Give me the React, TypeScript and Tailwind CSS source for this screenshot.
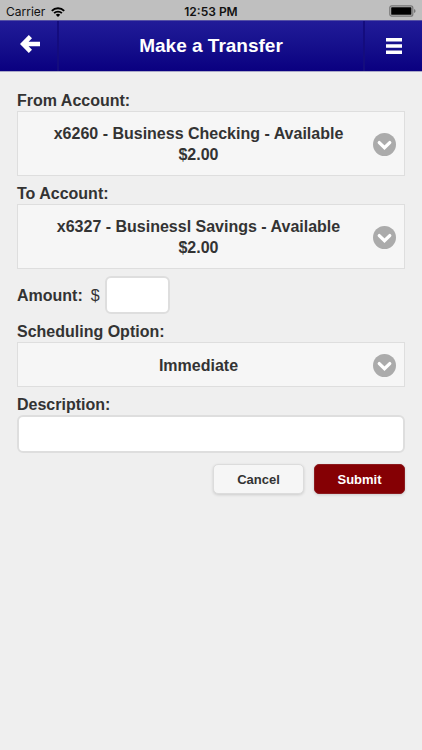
import { useState } from "react";

type SelectFieldProps = {
  id: string;
  label: string;
  options: string[];
};

function SelectField({ id, label, options }: SelectFieldProps) {
  const [value, setValue] = useState(options[0]);
  return (
    <div>
      <label htmlFor={id} className="block">
        {label}
      </label>
      <div className="relative flex min-h-[45px] items-center border border-[#dedede] bg-[#f6f6f6] pt-[11px] pr-2 pb-2.5 pl-1.5">
        <span aria-hidden="true" className="flex-1 px-4 text-center">
          {value}
        </span>
        <svg aria-hidden="true" viewBox="0 0 22 22" className="-my-1 size-[23px] shrink-0">
          <circle cx="11" cy="11" r="11" fill="#ababab" />
          <path
            d="M6 9.2 L11 14 L16 9.2"
            fill="none"
            stroke="#fff"
            strokeWidth="3.2"
            strokeLinecap="round"
            strokeLinejoin="miter"
          />
        </svg>
        <select
          id={id}
          value={value}
          onChange={(e) => setValue(e.target.value)}
          className="absolute inset-0 size-full cursor-pointer opacity-0"
        >
          {options.map((option) => (
            <option key={option}>{option}</option>
          ))}
        </select>
      </div>
    </div>
  );
}

function StatusBar() {
  return (
    <div className="grid h-5 grid-cols-3 items-center bg-[#bfbfbf] px-1.5 font-[Inter,sans-serif] text-xs leading-5 text-[#111]">
      <div className="flex items-center gap-1.5 pt-0.5">
        <span className="font-normal">Carrier</span>
        <svg aria-label="Wi-Fi" viewBox="0 0 14 10" className="h-2.5 w-3.5">
          <g fill="none" stroke="#000" strokeWidth="1.9">
            <path d="M0.8 3.8 A8.8 8.8 0 0 1 13.2 3.8" />
            <path d="M3.1 6.2 A5.5 5.5 0 0 1 10.9 6.2" />
          </g>
          <path d="M7 10 L4.8 7.8 A3.1 3.1 0 0 1 9.2 7.8 Z" fill="#000" />
        </svg>
      </div>
      <span className="pt-0.5 text-center font-semibold">12:53 PM</span>
      <svg aria-label="Battery" viewBox="0 0 27 12" className="h-3 w-[27px] justify-self-end">
        <rect x="0.8" y="0.8" width="23" height="10.4" rx="2" fill="none" stroke="#777" strokeWidth="1.2" />
        <rect x="2.2" y="2.2" width="20.2" height="7.6" rx="0.6" fill="#000" />
        <path d="M25 4 Q26.6 4.4 26.6 6 Q26.6 7.6 25 8 Z" fill="#777" />
      </svg>
    </div>
  );
}

export default function App() {
  return (
    <div className="min-h-screen bg-[#efefef] font-['Liberation_Sans',Arial,sans-serif] text-base leading-[21px] font-bold text-[#333]">
      <StatusBar />
      <header className="flex h-[52px] items-stretch border-t border-b border-t-[#5550a5] border-b-[#aaa8c8] bg-linear-to-b from-[#211b98] to-[#0a0080] text-white">
        <button
          type="button"
          aria-label="Back"
          className="flex w-[59px] items-center justify-center border-r-2 border-[#140c7e] pb-1 pl-0.5"
        >
          <svg viewBox="0 0 20 18" className="h-[18px] w-5">
            <path d="M0 9 L8.8 0 L12 3.2 L8.6 6.7 H20 V11.3 H8.6 L12 14.8 L8.8 18 Z" fill="#fff" />
          </svg>
        </button>
        <h1 className="flex flex-1 items-center justify-center pb-px text-[19px] font-bold">
          Make a Transfer
        </h1>
        <button
          type="button"
          aria-label="Menu"
          className="flex w-[59px] items-center justify-center border-l-2 border-[#140c7e] pb-px"
        >
          <svg viewBox="0 0 16 16" className="size-4">
            <path d="M0 0 H16 V3.4 H0 Z M0 6.3 H16 V9.7 H0 Z M0 12.6 H16 V16 H0 Z" fill="#fff" />
          </svg>
        </button>
      </header>
      <main>
        <form onSubmit={(e) => e.preventDefault()} className="flex flex-col gap-[7px] px-[17px] pt-[18px]">
          <SelectField
            id="from-account"
            label="From Account:"
            options={["x6260 - Business Checking - Available $2.00"]}
          />
          <SelectField
            id="to-account"
            label="To Account:"
            options={["x6327 - Businessl Savings - Available $2.00"]}
          />
          <div className="flex items-center">
            <label htmlFor="amount">Amount:</label>
            <span className="pr-[5px] pl-2 font-normal">$</span>
            <input
              id="amount"
              type="text"
              inputMode="decimal"
              className="h-[38px] w-[65px] rounded-md border-2 border-[#dedede] bg-white px-2 font-normal"
            />
          </div>
          <SelectField id="schedule" label="Scheduling Option:" options={["Immediate"]} />
          <div>
            <label htmlFor="description" className="block">
              Description:
            </label>
            <input
              id="description"
              type="text"
              className="block h-[38px] w-full rounded-md border-2 border-[#dedede] bg-white px-2 font-normal"
            />
          </div>
          <div className="flex justify-end gap-2.5 pt-1 text-[13px]">
            <button
              type="button"
              className="h-[30px] w-[91px] rounded-[5px] border border-[#dcdcdc] bg-[#f6f6f6] shadow-[0_1px_3px_rgba(0,0,0,0.15)]"
            >
              Cancel
            </button>
            <button
              type="submit"
              className="h-[30px] w-[91px] rounded-[5px] border border-[#8c1a1e] bg-[#850004] text-white shadow-[0_1px_3px_rgba(0,0,0,0.15)]"
            >
              Submit
            </button>
          </div>
        </form>
      </main>
    </div>
  );
}
